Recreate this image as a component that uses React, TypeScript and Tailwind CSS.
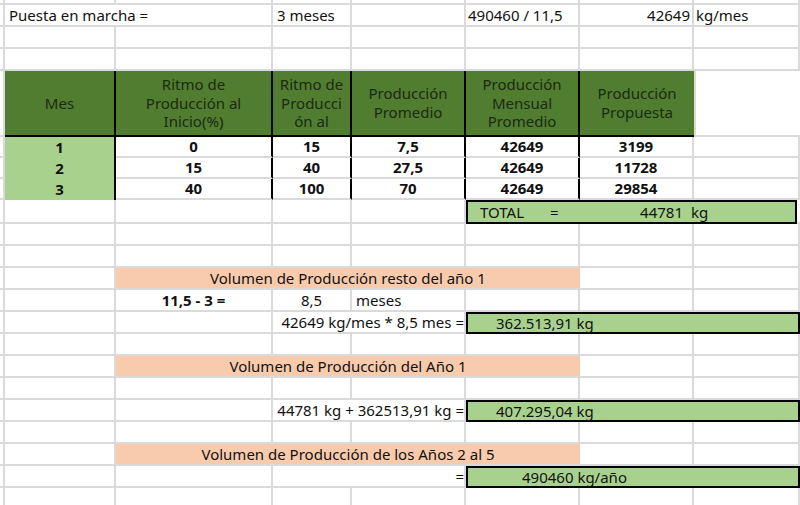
import type { ReactNode } from "react";

const grid = "border-r-2 border-b-2 border-[#dadada]";

function Cell({
  w,
  className = "",
  children,
}: {
  w: string;
  className?: string;
  children?: ReactNode;
}) {
  return (
    <div
      className={`${w} ${className.includes("border") ? "" : grid} ${className} flex h-full shrink-0 items-center overflow-hidden whitespace-nowrap`}
    >
      {children}
    </div>
  );
}

function Row({ h = "h-[22px]", children }: { h?: string; children?: ReactNode }) {
  return <div className={`flex ${h}`}>{children}</div>;
}

function EmptyRow({ h }: { h?: string }) {
  return (
    <Row h={h}>
      <Cell w="w-[5px]" />
      <Cell w="w-[111px]" />
      <Cell w="w-[157px]" />
      <Cell w="w-[79px]" />
      <Cell w="w-[114px]" />
      <Cell w="w-[114px]" />
      <Cell w="w-[114px]" />
      <Cell w="w-[106px]" />
    </Row>
  );
}

function Banner({ text }: { text: string }) {
  return (
    <Row>
      <Cell w="w-[5px]" />
      <Cell w="w-[111px]" />
      <Cell w="w-[464px]" className="justify-center bg-[#f8cbad] border-b-2 border-[#dadada]">
        {text}
      </Cell>
      <Cell w="w-[114px]" />
      <Cell w="w-[106px]" />
    </Row>
  );
}

function ResultRow({ formula, result, pad }: { formula: string; result: string; pad: string }) {
  return (
    <Row>
      <Cell w="w-[5px]" />
      <Cell w="w-[111px]" />
      <Cell w="w-[157px]" />
      <Cell w="w-[193px]" className={`${grid} justify-end`}>
        <span className="shrink-0">{formula}</span>
      </Cell>
      <div className="flex h-full w-[334px] shrink-0 items-center border-2 border-black bg-[#a9d18e]">
        <span className={pad}>{result}</span>
      </div>
      <div className="h-full w-[3px] border-b-2 border-[#dadada]" />
    </Row>
  );
}

const dataRows = [
  ["1", "0", "15", "7,5", "42649", "3199"],
  ["2", "15", "40", "27,5", "42649", "11728"],
  ["3", "40", "100", "70", "42649", "29854"],
];

export default function App() {
  const dark = "border-r-2 border-b-2 border-black";
  return (
    <div className="h-[505px] w-[800px] overflow-hidden bg-white font-['Liberation_Sans'] text-[15px] leading-tight text-[#111]">
      <EmptyRow h="h-[5px]" />
      <Row>
        <Cell w="w-[5px]" />
        <Cell w="w-[268px]" className={`${grid} pl-1`}>Puesta en marcha =</Cell>
        <Cell w="w-[79px]" className={`${grid} pl-1`}>3 meses</Cell>
        <Cell w="w-[114px]" />
        <Cell w="w-[114px]" className={`${grid} pl-0.5`}>490460 / 11,5</Cell>
        <Cell w="w-[114px]" className={`${grid} justify-end pr-0.5`}>42649</Cell>
        <Cell w="w-[106px]" className={`${grid} pl-0.5`}>kg/mes</Cell>
      </Row>
      <EmptyRow />
      <EmptyRow />

      <Row h="h-[66px]">
        <Cell w="w-[5px]" />
        <Cell w="w-[111px]" className={`${dark} justify-center bg-[#507d2f] text-[#1c2a12]`}>Mes</Cell>
        <Cell w="w-[157px]" className={`${dark} justify-center whitespace-normal bg-[#507d2f] text-center text-[#1c2a12]`}>
          <span>Ritmo de<br />Producción al<br />Inicio(%)</span>
        </Cell>
        <Cell w="w-[79px]" className={`${dark} justify-center whitespace-normal bg-[#507d2f] text-center text-[#1c2a12]`}>
          <span>Ritmo de<br />Producci<br />ón al</span>
        </Cell>
        <Cell w="w-[114px]" className={`${dark} justify-center whitespace-normal bg-[#507d2f] text-center text-[#1c2a12]`}>
          <span>Producción<br />Promedio</span>
        </Cell>
        <Cell w="w-[114px]" className={`${dark} justify-center whitespace-normal bg-[#507d2f] text-center text-[#1c2a12]`}>
          <span>Producción<br />Mensual<br />Promedio</span>
        </Cell>
        <Cell w="w-[114px]" className="justify-center whitespace-normal border-b-2 border-black bg-[#507d2f] text-center text-[#1c2a12]">
          <span>Producción<br />Propuesta</span>
        </Cell>
        <Cell w="w-[106px]" className="border-l-2 border-b-2 border-[#dadada]" />
      </Row>

      {dataRows.map((r) => (
        <Row key={r[0]} h="h-[21px]">
          <Cell w="w-[5px]" />
          <Cell w="w-[111px]" className="justify-center border-r-2 border-black bg-[#a9d18e] font-bold">{r[0]}</Cell>
          <Cell w="w-[157px]" className="justify-center border-r-2 border-b-2 border-r-black border-b-[#dadada] font-bold">{r[1]}</Cell>
          <Cell w="w-[79px]" className="justify-center border-r-2 border-b-2 border-r-black border-b-[#dadada] font-bold">{r[2]}</Cell>
          <Cell w="w-[114px]" className="justify-center border-r-2 border-b-2 border-r-black border-b-[#dadada] font-bold">{r[3]}</Cell>
          <Cell w="w-[114px]" className="justify-center border-r-2 border-b-2 border-r-black border-b-[#dadada] font-bold">{r[4]}</Cell>
          <Cell w="w-[114px]" className={`${grid} justify-center font-bold`}>{r[5]}</Cell>
          <Cell w="w-[106px]" />
        </Row>
      ))}

      <Row h="h-[24px]">
        <Cell w="w-[5px]" />
        <Cell w="w-[111px]" />
        <Cell w="w-[157px]" />
        <Cell w="w-[79px]" />
        <Cell w="w-[114px]" />
        <div className="flex h-full w-[331px] shrink-0 items-center border-2 border-black bg-[#a9d18e]">
          <span className="pl-3">TOTAL</span>
          <span className="pl-[26px]">=</span>
          <span className="ml-auto w-[100px] pr-1.5 text-right">44781</span>
          <span className="w-[106px] pl-0.5">kg</span>
        </div>
        <div className="h-full w-[3px] border-b-2 border-[#dadada]" />
      </Row>
      <EmptyRow />
      <EmptyRow />

      <Banner text="Volumen de Producción resto del año 1" />
      <Row>
        <Cell w="w-[5px]" />
        <Cell w="w-[111px]" />
        <Cell w="w-[157px]" className={`${grid} justify-center font-bold`}>11,5 - 3 =</Cell>
        <Cell w="w-[79px]" className={`${grid} justify-center`}>8,5</Cell>
        <Cell w="w-[114px]" className={`${grid} pl-1`}>meses</Cell>
        <Cell w="w-[114px]" />
        <Cell w="w-[114px]" />
        <Cell w="w-[106px]" />
      </Row>
      <ResultRow formula="42649 kg/mes * 8,5 mes =" result="362.513,91 kg" pad="pl-7" />
      <EmptyRow />
      <Banner text="Volumen de Producción del Año 1" />
      <EmptyRow />
      <ResultRow formula="44781 kg + 362513,91 kg  =" result="407.295,04 kg" pad="pl-7" />
      <EmptyRow />
      <Banner text="Volumen de Producción de los Años 2 al 5" />
      <ResultRow formula="=" result="490460 kg/año" pad="pl-[54px]" />
      <EmptyRow />
    </div>
  );
}
